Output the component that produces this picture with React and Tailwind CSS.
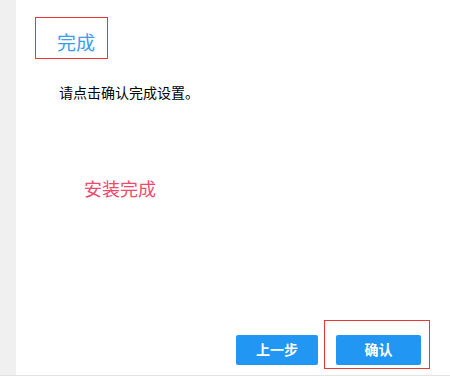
import React from "react";

const App = () => {
  return (
    <div
      className="flex w-[450px] h-[376px] bg-white overflow-hidden border-b border-[#e3e3e3]"
      style={{ fontFamily: '"Liberation Sans", "Noto Sans CJK SC", sans-serif' }}
    >
      {/* left gutter */}
      <div className="w-4 shrink-0 bg-[#f0f0f0]" />

      {/* panel */}
      <div className="flex-1 flex flex-col">
        {/* title */}
        <div className="mt-[17px] ml-[19px] w-[73px] h-[42px] border border-[#e53935] pt-[16px] pl-[21px]">
          <h2 className="text-[19px] leading-[19px] text-[#3d9bf2] font-normal">完成</h2>
        </div>

        <p className="mt-[24px] ml-[43px] text-[14px] leading-[20px] text-black">
          请点击确认完成设置。
        </p>

        <p className="mt-[75px] ml-[68px] text-[18px] leading-[24px] text-[#ef4a6c]">
          安装完成
        </p>

        {/* actions */}
        <div className="mt-auto mb-[6px] mr-[20px] flex justify-end items-end gap-[6px]">
          <button className="mb-[4px] w-[82px] h-[30px] rounded-[2px] bg-[#2196f3] text-white text-[14px] font-bold">
            上一步
          </button>
          <div className="w-[106px] h-[49px] border border-[#e53935] pl-[11px] pt-[14px]">
            <button className="w-[85px] h-[30px] rounded-[2px] bg-[#2196f3] text-white text-[14px] font-bold">
              确认
            </button>
          </div>
        </div>
      </div>
    </div>
  );
};

export default App;
